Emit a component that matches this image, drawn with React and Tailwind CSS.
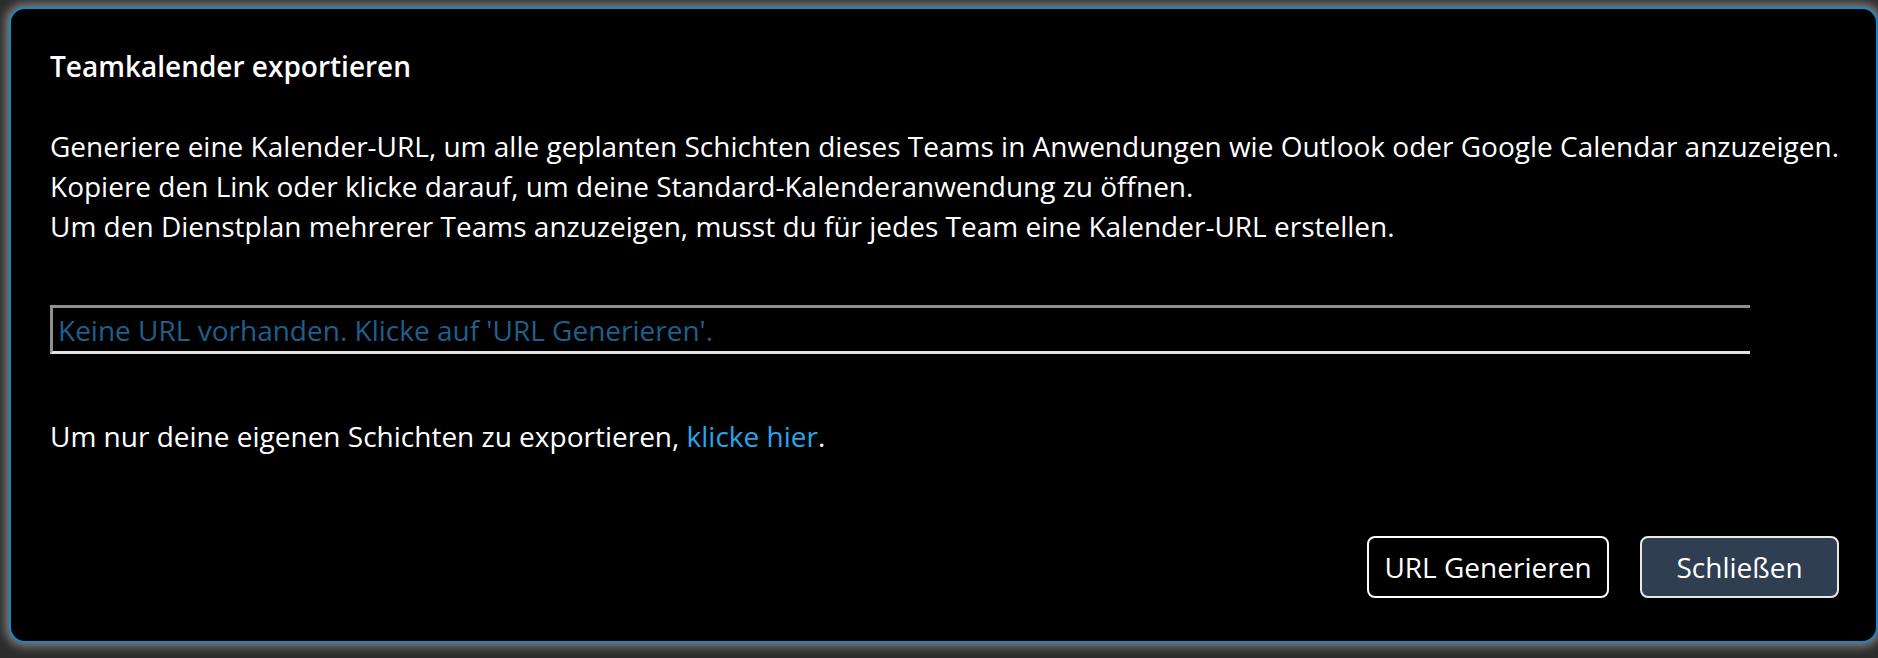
export default function App() {
  const font = { fontFamily: '"Open Sans", "Noto Sans", sans-serif' };
  return (
    <div
      className="w-[1878px] h-[658px] overflow-hidden bg-[#2c2c2c] pt-[7px] pl-[9px]"
      style={font}
    >
      <div className="w-[1869px] h-[636px] bg-black border-2 border-[#1a86c4] rounded-[16px] shadow-[0_0_10px_4px_rgba(150,150,150,0.75)] flex flex-col pl-[39px] pr-[37px] pt-[37px] text-white text-[28px] leading-[40px]">
        <h2 className="font-semibold whitespace-nowrap">Teamkalender exportieren</h2>
        <div className="mt-[40px] whitespace-nowrap">
          <p>
            Generiere eine Kalender-URL, um alle geplanten Schichten dieses Teams in Anwendungen wie Outlook oder Google Calendar anzuzeigen.
          </p>
          <p>Kopiere den Link oder klicke darauf, um deine Standard-Kalenderanwendung zu öffnen.</p>
          <p>Um den Dienstplan mehrerer Teams anzuzeigen, musst du für jedes Team eine Kalender-URL erstellen.</p>
        </div>
        <div className="mt-[59px] w-[1700px] h-[49px] border-t-[3px] border-l-[3px] border-b-[3px] border-t-[#8f8f8f] border-l-[#8f8f8f] border-b-[#e4e4e4] flex items-center pl-[5px]">
          <span className="text-[#1f5f8c] whitespace-nowrap">Keine URL vorhanden. Klicke auf 'URL Generieren'.</span>
        </div>
        <p className="mt-[62px] whitespace-nowrap">
          Um nur deine eigenen Schichten zu exportieren, <span className="text-[#2aa4e8]">klicke hier</span>.
        </p>
        <div className="mt-[80px] flex justify-end gap-[31px]">
          <button className="w-[242px] h-[62px] border-2 border-white rounded-[8px] bg-black text-white">
            URL Generieren
          </button>
          <button className="w-[199px] h-[62px] border-2 border-[#e8e8e8] rounded-[8px] bg-[#2f3f51] text-white">
            Schließen
          </button>
        </div>
      </div>
    </div>
  );
}
